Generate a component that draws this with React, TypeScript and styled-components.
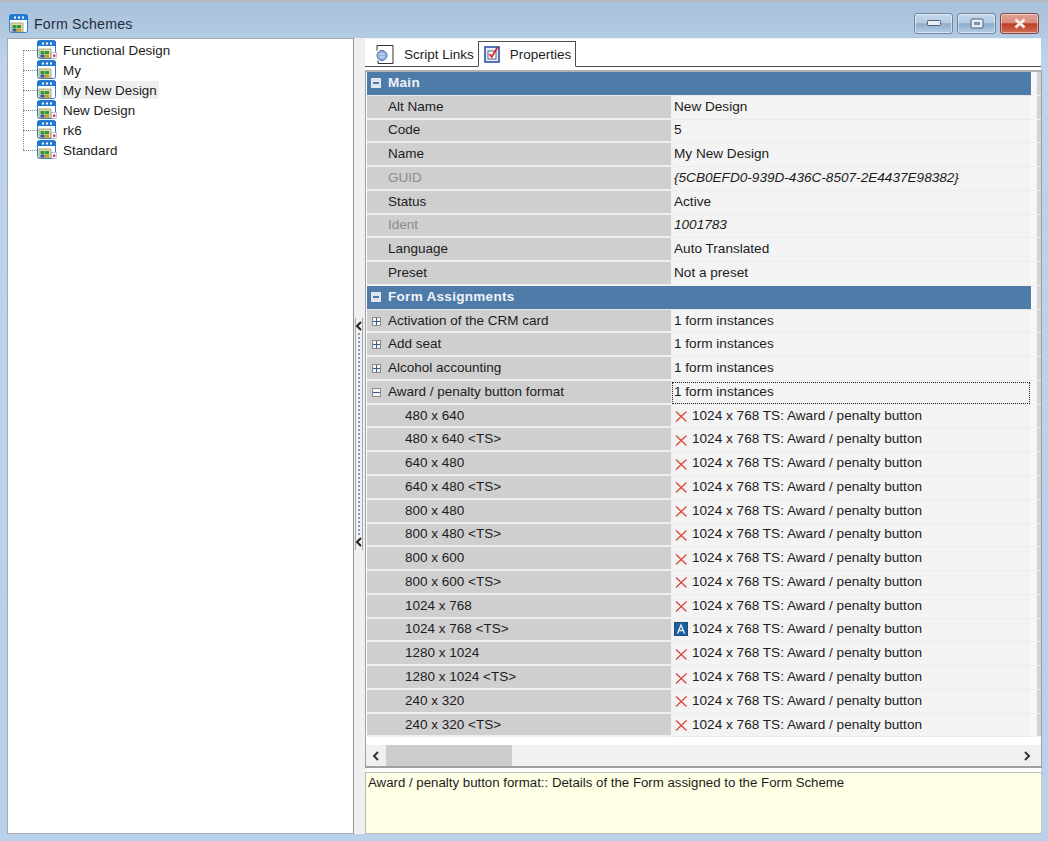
import React from "react";
import styled, { createGlobalStyle } from "styled-components";

const Global = createGlobalStyle`
  html, body { margin: 0; padding: 0; background: #b9d1ea; }
  * { box-sizing: border-box; }
  #root { width: 1048px; height: 841px; overflow: hidden; }
`;

const Window = styled.div`
  width: 1048px;
  height: 841px;
  display: flex;
  flex-direction: column;
  font-family: "Liberation Sans", Arial, sans-serif;
  font-size: 13.5px;
  color: #1c1c1c;
  background: linear-gradient(180deg, #a9c0da 0, #bcd3eb 60px, #b9d1ea 100%);
  border-top: 2px solid #b4b8bd;
`;

const TitleBar = styled.div`
  height: 36px;
  flex: none;
  display: flex;
  align-items: center;
  padding: 8px 9px 0 9px;
`;

const TitleText = styled.span`
  margin-left: 5px;
  font-size: 14.2px;
  color: #1f2d3d;
  letter-spacing: 0.2px;
`;

const WindowButtons = styled.div`
  margin-left: auto;
  display: flex;
  gap: 4px;
  margin-top: -2px;
`;

const WinButton = styled.button<{ $close?: boolean }>`
  width: 39px;
  height: 21px;
  padding: 0;
  display: flex;
  align-items: center;
  justify-content: center;
  border-radius: 3px;
  border: 1px solid ${(p) => (p.$close ? "#7d4a45" : "#6d86a3")};
  background: ${(p) =>
    p.$close
      ? "linear-gradient(180deg,#e0a195 0,#d98c7c 45%,#bf3b22 52%,#d0705a 100%)"
      : "linear-gradient(180deg,#c6d9ec 0,#b4cbe3 45%,#8fadcd 52%,#b6cde4 100%)"};
  box-shadow: inset 0 0 0 1px rgba(255, 255, 255, 0.45);
`;

const Body = styled.div`
  flex: 1;
  display: flex;
  padding: 0 7px 7px 7px;
  min-height: 0;
`;

const TreePanel = styled.div`
  width: 347px;
  flex: none;
  background: #fff;
  border: 1px solid #a5a8ac;
  border-right-color: #8f9296;
  padding-top: 1px;
`;

const TreeRow = styled.div`
  position: relative;
  height: 20px;
  display: flex;
  align-items: center;
  padding-left: 29px;
  &::before {
    content: "";
    position: absolute;
    left: 15px;
    top: 10px;
    width: 14px;
    border-top: 1px dotted #909090;
  }
`;

const TreeSpine = styled.div`
  position: absolute;
  left: 23px;
  top: 50px;
  height: 100px;
  border-left: 1px dotted #909090;
`;

const TreeLabel = styled.span<{ $selected?: boolean }>`
  margin-left: 4px;
  padding: 1px 2px 0;
  line-height: 17px;
  font-size: 13.4px;
  background: ${(p) => (p.$selected ? "#efefef" : "transparent")};
`;

const Splitter = styled.div`
  width: 11px;
  flex: none;
  background: #f0f0f0;
  padding-top: 280px;
  padding-left: 1px;
`;

const Grip = styled.div`
  width: 8px;
  height: 232px;
  border: 1px solid #a8a8a8;
  border-top: none;
  border-bottom: none;
  display: flex;
  flex-direction: column;
  align-items: center;
  justify-content: space-between;
  padding: 3px 0;
`;

const GripDots = styled.div`
  flex: 1;
  width: 3px;
  margin: 2px 0;
  border-left: 2px dotted #7d9cc0;
`;

const RightPanel = styled.div`
  flex: 1;
  min-width: 0;
  display: flex;
  flex-direction: column;
`;

const TabStrip = styled.div`
  height: 29px;
  flex: none;
  background: #fff;
  display: flex;
  align-items: flex-end;
  padding-left: 9px;
  border-bottom: 1px solid #4d4d4d;
  border-top: 1px solid #eef3f8;
`;

const Tab = styled.div<{ $active?: boolean }>`
  height: ${(p) => (p.$active ? 26 : 24)}px;
  display: flex;
  align-items: center;
  gap: ${(p) => (p.$active ? 9 : 10)}px;
  padding: 0 4px 0 ${(p) => (p.$active ? 5 : 1)}px;
  background: #fff;
  ${(p) =>
    p.$active
      ? "border: 1px solid #4d4d4d; border-bottom: 1px solid #fff; margin-bottom: -1px;"
      : ""}
`;

const GridFrame = styled.div`
  flex: 1;
  min-height: 0;
  background: #fff;
  display: flex;
  flex-direction: column;
  padding: 3px 0 0 0;
`;

const GridBox = styled.div`
  height: 698px;
  flex: none;
  border: 1px solid #a0a0a0;
  border-top: 2px solid #b0b0b0;
  border-bottom: 2px solid #a0a0a0;
  margin-right: -1px;
  padding: 0 0 0 1px;
  display: flex;
  flex-direction: column;
`;

const GridRows = styled.div`
  flex: 1;
  min-height: 0;
`;

const Row = styled.div`
  height: 23.77px;
  display: grid;
  grid-template-columns: 304px 360px 1fr;
`;

const HeaderCell = styled.div`
  grid-column: 1 / 3;
  background: #4f7ba8;
  color: #eef3f9;
  font-weight: bold;
  display: flex;
  align-items: center;
  padding-left: 4px;
  padding-bottom: 1px;
  gap: 7px;
  letter-spacing: 0.3px;
  border-bottom: 1px solid #e8e8e8;
`;

const LabelCell = styled.div<{ $muted?: boolean; $child?: boolean }>`
  background: #cfcfcf;
  border-bottom: 2px solid #efefef;
  color: ${(p) => (p.$muted ? "#8b8b8b" : "#1c1c1c")};
  display: flex;
  align-items: center;
  padding-left: ${(p) => (p.$child ? 38 : 21)}px;
  padding-bottom: 1px;
  position: relative;
`;

const ValueCell = styled.div<{ $italic?: boolean; $focus?: boolean }>`
  background: #f3f3f3;
  border-bottom: 1px solid #ececec;
  display: flex;
  align-items: center;
  gap: 4px;
  padding-left: 3px;
  padding-bottom: 2px;
  font-size: 13.6px;
  font-style: ${(p) => (p.$italic ? "italic" : "normal")};
  ${(p) => (p.$focus ? "outline: 1px dotted #222; outline-offset: -2px;" : "")}
`;

const TailCell = styled.div`
  background: linear-gradient(90deg, #fafafa 0, #f4f4f4 55%, #d4d4d4 60%, #cfcfcf 100%);
  border-bottom: 1px solid #f0f0f0;
`;

const ExpandBox = styled.span`
  position: absolute;
  left: 5px;
  top: 7px;
  width: 9px;
  height: 9px;
  border: 1px solid #8d8d8d;
  background: #f4f4f4;
`;

const HeaderBox = styled.span`
  width: 10px;
  height: 10px;
  background: #dfe6ee;
  display: flex;
  align-items: center;
  justify-content: center;
`;

const HeaderDash = styled.span`
  width: 6px;
  height: 2px;
  background: #4f7ba8;
`;

const ScrollGap = styled.div`
  height: 8px;
  flex: none;
  background: #fff;
`;

const HScroll = styled.div`
  height: 21px;
  flex: none;
  background: #f0f0f0;
  display: flex;
  align-items: center;
  padding-right: 4px;
  margin-left: -1px;
`;

const ScrollArrow = styled.span`
  width: 20px;
  flex: none;
  display: flex;
  justify-content: center;
`;

const ScrollThumb = styled.div`
  width: 126px;
  height: 21px;
  background: #cdcdcd;
`;

const ScrollFill = styled.div`
  flex: 1;
`;

const Description = styled.div`
  height: 62px;
  flex: none;
  margin-top: 4px;
  background: #ffffe6;
  border: 1px solid #bdbdb0;
  border-right-color: #c6c6c6;
  padding: 2px 2px;
  line-height: 16px;
  margin-right: -1px;
  font-size: 13.25px;
`;

const SchemeIcon = ({ badge }: { badge?: boolean }) => (
  <svg width="20" height="20" viewBox="0 0 20 20">
    <rect x="0.5" y="0.5" width="18" height="18" rx="2" fill="#fff" stroke="#2f7fd0" />
    <path d="M0 2.5a2 2 0 0 1 2-2h15a2 2 0 0 1 2 2V6H0z" fill="#1f78d1" />
    <rect x="5" y="2.5" width="2" height="2" fill="#fff" />
    <rect x="9" y="2.5" width="2" height="2" fill="#fff" />
    <rect x="13" y="2.5" width="2" height="2" fill="#fff" />
    <rect x="2" y="9" width="12" height="9" fill="#e9d9a8" stroke="#8b8b6c" strokeWidth="0.7" />
    <rect x="3.5" y="11" width="4" height="3" fill="#2d9a3a" />
    <rect x="8" y="11" width="4" height="3" fill="#2d9a3a" />
    <rect x="3.5" y="14.5" width="4" height="3" fill="#2b5ea8" />
    <rect x="8" y="14.5" width="4" height="3" fill="#c8a020" />
    {badge && <rect x="14.5" y="12.5" width="5" height="6" fill="#fff" stroke="#9aa7b5" strokeWidth="0.6" />}
    {badge && <rect x="16" y="14.5" width="2.4" height="2.4" fill="#d8356b" />}
  </svg>
);

const ScriptIcon = () => (
  <svg width="19" height="21" viewBox="0 0 19 21">
    <path d="M2 1.5h16v18H3v-3" fill="#fff" stroke="#333" />
    <rect x="2" y="2" width="3" height="5" fill="#fff" />
    <path d="M2 1.5v5" stroke="#333" />
    <circle cx="7" cy="11.5" r="5" fill="#8fb2e0" stroke="#4a6fa8" />
    <path d="M4.5 10h5M4.5 13h5" stroke="#dde8f6" />
  </svg>
);

const PropsIcon = () => (
  <svg width="17" height="18" viewBox="0 0 17 18">
    <rect x="1" y="2" width="14" height="15" fill="#e8eefb" stroke="#2c4fa8" strokeWidth="1.6" />
    <rect x="4" y="6" width="8" height="8" fill="#fff" stroke="#55608a" />
    <path d="M5.5 9l2.2 3 6-10" fill="none" stroke="#d62a2a" strokeWidth="1.8" />
  </svg>
);

const Cross = () => (
  <svg width="14" height="14" viewBox="0 0 14 14">
    <path d="M2 3.5L12.5 13.5M12.5 3.5L2 13.5" stroke="#d8473d" strokeWidth="1.3" fill="none" />
  </svg>
);

const AutoIcon = () => (
  <svg width="14" height="14" viewBox="0 0 14 14">
    <rect x="0.5" y="0.5" width="13" height="13" fill="#1c5f9c" stroke="#16507f" />
    <path d="M3.5 11.5L7 3l3.5 8.5M5 8.5h4" stroke="#e6f0fa" strokeWidth="1.3" fill="none" />
  </svg>
);

const Chevron = ({ dir, size = 10, color = "#333" }: { dir: "l" | "r"; size?: number; color?: string }) => (
  <svg width={size} height={size} viewBox="0 0 10 10">
    <path d={dir === "l" ? "M7 1L3 5l4 4" : "M3 1l4 4-4 4"} fill="none" stroke={color} strokeWidth="2" />
  </svg>
);

const Glyph = ({ minus }: { minus?: boolean }) => (
  <svg width="7" height="7" viewBox="0 0 7 7" style={{ display: "block" }}>
    <path d={minus ? "M0 3.5h7" : "M0 3.5h7M3.5 0v7"} stroke="#3c5a86" strokeWidth="1" />
  </svg>
);

const treeItems = [
  { name: "Functional Design", badge: true },
  { name: "My", badge: false },
  { name: "My New Design", badge: false, selected: true },
  { name: "New Design", badge: true },
  { name: "rk6", badge: true },
  { name: "Standard", badge: true },
];

const mainRows = [
  { label: "Alt Name", value: "New Design" },
  { label: "Code", value: "5" },
  { label: "Name", value: "My New Design" },
  { label: "GUID", value: "{5CB0EFD0-939D-436C-8507-2E4437E98382}", muted: true },
  { label: "Status", value: "Active" },
  { label: "Ident", value: "1001783", muted: true },
  { label: "Language", value: "Auto Translated" },
  { label: "Preset", value: "Not a preset" },
];

const assignRows = ["Activation of the CRM card", "Add seat", "Alcohol accounting"];

const sizes = [
  "480 x 640",
  "480 x 640 <TS>",
  "640 x 480",
  "640 x 480 <TS>",
  "800 x 480",
  "800 x 480 <TS>",
  "800 x 600",
  "800 x 600 <TS>",
  "1024 x 768",
  "1024 x 768 <TS>",
  "1280 x 1024",
  "1280 x 1024 <TS>",
  "240 x 320",
  "240 x 320 <TS>",
];

const Header = ({ title }: { title: string }) => (
  <Row>
    <HeaderCell>
      <HeaderBox>
        <HeaderDash />
      </HeaderBox>
      {title}
    </HeaderCell>
    <TailCell />
  </Row>
);

export default function App() {
  return (
    <Window>
      <Global />
      <TitleBar>
        <SchemeIcon />
        <TitleText>Form Schemes</TitleText>
        <WindowButtons>
          <WinButton aria-label="Minimize">
            <svg width="14" height="6" viewBox="0 0 14 6">
              <rect x="0.5" y="0.5" width="13" height="5" rx="1" fill="#e8edf3" stroke="#4f5f73" />
            </svg>
          </WinButton>
          <WinButton aria-label="Maximize">
            <svg width="14" height="11" viewBox="0 0 14 11">
              <rect x="1" y="1" width="12" height="9" rx="1" fill="#e8edf3" stroke="#4f5f73" />
              <rect x="4" y="4" width="6" height="3" fill="#7e95ad" />
            </svg>
          </WinButton>
          <WinButton $close aria-label="Close">
            <svg width="14" height="11" viewBox="0 0 14 11">
              <path d="M2.5 1.5L11.5 9.5M11.5 1.5L2.5 9.5" stroke="#f3ece8" strokeWidth="3" />
            </svg>
          </WinButton>
        </WindowButtons>
      </TitleBar>
      <Body>
        <TreePanel>
          <TreeSpine />
          {treeItems.map((t) => (
            <TreeRow key={t.name}>
              <SchemeIcon badge={t.badge} />
              <TreeLabel $selected={t.selected}>{t.name}</TreeLabel>
            </TreeRow>
          ))}
        </TreePanel>
        <Splitter>
          <Grip>
            <Chevron dir="l" size={10} color="#222" />
            <GripDots />
            <Chevron dir="l" size={10} color="#222" />
          </Grip>
        </Splitter>
        <RightPanel>
          <TabStrip>
            <Tab>
              <ScriptIcon />
              Script Links
            </Tab>
            <Tab $active>
              <PropsIcon />
              Properties
            </Tab>
          </TabStrip>
          <GridFrame>
            <GridBox>
              <GridRows>
                <Header title="Main" />
                {mainRows.map((r) => (
                  <Row key={r.label}>
                    <LabelCell $muted={r.muted}>{r.label}</LabelCell>
                    <ValueCell $italic={r.muted}>{r.value}</ValueCell>
                    <TailCell />
                  </Row>
                ))}
                <Header title="Form Assignments" />
                {assignRows.map((label) => (
                  <Row key={label}>
                    <LabelCell>
                      <ExpandBox>
                        <Glyph />
                      </ExpandBox>
                      {label}
                    </LabelCell>
                    <ValueCell>1 form instances</ValueCell>
                    <TailCell />
                  </Row>
                ))}
                <Row>
                  <LabelCell>
                    <ExpandBox>
                      <Glyph minus />
                    </ExpandBox>
                    Award / penalty button format
                  </LabelCell>
                  <ValueCell $focus>1 form instances</ValueCell>
                  <TailCell />
                </Row>
                {sizes.map((s) => (
                  <Row key={s}>
                    <LabelCell $child>{s}</LabelCell>
                    <ValueCell>
                      {s === "1024 x 768 <TS>" ? <AutoIcon /> : <Cross />}
                      1024 x 768 TS: Award / penalty button
                    </ValueCell>
                    <TailCell />
                  </Row>
                ))}
              </GridRows>
              <ScrollGap />
              <HScroll>
                <ScrollArrow>
                  <Chevron dir="l" />
                </ScrollArrow>
                <ScrollThumb />
                <ScrollFill />
                <ScrollArrow>
                  <Chevron dir="r" />
                </ScrollArrow>
              </HScroll>
            </GridBox>
            <Description>Award / penalty button format:: Details of the Form assigned to the Form Scheme</Description>
          </GridFrame>
        </RightPanel>
      </Body>
    </Window>
  );
}
